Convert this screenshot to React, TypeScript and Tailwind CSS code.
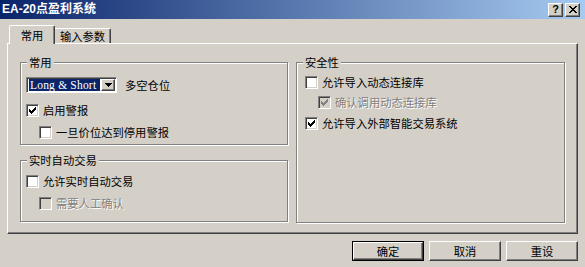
import React from "react";

const FONT = {
    fontFamily: '"Noto Sans CJK SC", "Liberation Sans", sans-serif',
};

function Check({ checked = false, disabled = false }: { checked?: boolean; disabled?: boolean }) {
    return (
        <span
            className={`relative flex h-[13px] w-[13px] shrink-0 items-center justify-center border border-t-[#808080] border-l-[#808080] border-b-white border-r-white shadow-[inset_1px_1px_0_#404040,inset_-1px_-1px_0_#d4d0c8] ${
                disabled ? "bg-[#d4d0c8]" : "bg-white"
            }`}
        >
            {checked && (
                <svg width="7" height="7" viewBox="0 0 7 7" shapeRendering="crispEdges">
                    <path
                        d="M0 2h1v1h1v1h1V3h1V2h1V1h1V0h1v3H6v1H5v1H4v1H3v1H2V6H1V5H0z"
                        fill={disabled ? "#808080" : "#000"}
                    />
                </svg>
            )}
        </span>
    );
}

function CheckRow({
    label,
    checked,
    disabled,
    indent,
}: {
    label: string;
    checked?: boolean;
    disabled?: boolean;
    indent?: boolean;
}) {
    return (
        <div className={`flex h-[14px] items-center gap-[4px] ${indent ? "ml-[13px]" : ""}`}>
            <Check checked={checked} disabled={disabled} />
            <span
                className={`leading-[14px] ${
                    disabled ? "text-[#808080] [text-shadow:1px_1px_0_#fff]" : "text-black"
                }`}
            >
                {label}
            </span>
        </div>
    );
}

function Group({
    title,
    className,
    children,
}: {
    title: string;
    className: string;
    children: React.ReactNode;
}) {
    return (
        <div
            className={`relative border border-[#808080] shadow-[1px_1px_0_#fff,inset_1px_1px_0_#fff] ${className}`}
        >
            {/* caption sits over the etched line */}
            <span className="absolute left-[6px] top-[-8px] bg-[#d4d0c8] px-[2px] leading-[14px]">
                {title}
            </span>
            {children}
        </div>
    );
}

function Raised({ className, children }: { className: string; children?: React.ReactNode }) {
    return (
        <div
            className={`flex items-center justify-center border border-t-white border-l-white border-b-[#404040] border-r-[#404040] bg-[#d4d0c8] shadow-[inset_-1px_-1px_0_#808080] ${className}`}
        >
            {children}
        </div>
    );
}

export default function App() {
    return (
        <div className="h-[267px] w-[585px] overflow-hidden bg-[#d4d0c8] text-[11.3px] text-black" style={FONT}>
            {/* Title bar */}
            <div className="flex h-[19px] items-center bg-[linear-gradient(to_right,#0a246a,#a6caf0)] pl-[2px] pr-[5px]">
                <span
                    className="text-[12px] font-bold leading-[19px] text-white"
                    style={{ fontFamily: '"Liberation Sans", "Noto Sans CJK SC", sans-serif' }}
                >
                    EA-20点盈利系统
                </span>
                <div className="ml-auto flex gap-[2px]">
                    <Raised className="h-[14px] w-[15px]">
                        <span
                            className="text-[11px] font-bold leading-[11px]"
                            style={{ fontFamily: '"Liberation Sans", sans-serif' }}
                        >
                            ?
                        </span>
                    </Raised>
                    <Raised className="h-[14px] w-[15px]">
                        <svg width="8" height="7" viewBox="0 0 8 7" shapeRendering="crispEdges">
                            <path
                                d="M0 0h2v1h1v1h2V1h1V0h2v1H7v1H6v1H5v1h1v1h1v1h1v1H6V6H5V5H3v1H2v1H0V6h1V5h1V4h1V3H2V2H1V1H0z"
                                fill="#000"
                            />
                        </svg>
                    </Raised>
                </div>
            </div>

            <div className="pl-[7px] pr-[7px]">
                {/* Tabs */}
                <div className="flex h-[24px] items-end pl-[2px]">
                    <div className="relative z-10 -mb-px flex h-[19px] w-[46px] items-start justify-center rounded-t-[2px] border-l border-t border-r border-l-white border-t-white border-r-[#404040] bg-[#d4d0c8] pt-[2px] shadow-[inset_-1px_0_0_#808080]">
                        <span className="leading-[14px]">常用</span>
                    </div>
                    <div className="flex h-[15px] w-[56px] items-start justify-center rounded-tr-[2px] border-t border-r border-t-white border-r-[#404040] shadow-[inset_-1px_0_0_#808080]">
                        <span className="leading-[14px]">输入参数</span>
                    </div>
                </div>

                {/* Tab panel */}
                <div className="flex h-[191px] gap-[8px] border border-t-white border-l-white border-b-[#404040] border-r-[#404040] px-[12px] pt-[18px] shadow-[inset_-1px_-1px_0_#808080]">
                    <div className="flex w-[268px] flex-col gap-[15px]">
                        <Group title="常用" className="h-[83px] pl-[5px] pt-[14px]">
                            <div className="flex items-center gap-[8px]">
                                <div className="flex h-[16px] w-[91px] items-center border border-t-[#808080] border-l-[#808080] border-b-white border-r-white bg-white pl-[2px] pr-[1px] shadow-[inset_1px_1px_0_#404040]">
                                    <span
                                        className="flex h-[12px] flex-1 items-center overflow-hidden whitespace-nowrap bg-[#0a246a] pl-[1px] text-[11.5px] leading-[12px] tracking-[0.2px] text-white"
                                        style={{ fontFamily: '"Liberation Serif", serif' }}
                                    >
                                        Long &amp; Short
                                    </span>
                                    <Raised className="ml-[1px] h-[12px] w-[14px] shrink-0">
                                        <svg width="7" height="4" viewBox="0 0 7 4" shapeRendering="crispEdges">
                                            <path d="M0 0h7v1H6v1H5v1H4v1H3V3H2V2H1V1H0z" fill="#000" />
                                        </svg>
                                    </Raised>
                                </div>
                                <span className="leading-[14px]">多空仓位</span>
                            </div>
                            <div className="mt-[10px] flex flex-col gap-[8px]">
                                <CheckRow label="启用警报" checked />
                                <CheckRow label="一旦价位达到停用警报" indent />
                            </div>
                        </Group>

                        <Group title="实时自动交易" className="flex h-[62px] flex-col gap-[8px] pl-[5px] pt-[13px]">
                            <CheckRow label="允许实时自动交易" />
                            <CheckRow label="需要人工确认" disabled indent />
                        </Group>
                    </div>

                    <Group title="安全性" className="flex h-[161px] w-[269px] flex-col gap-[6px] pl-[8px] pt-[12px]">
                        <CheckRow label="允许导入动态连接库" />
                        <CheckRow label="确认调用动态连接库" checked disabled indent />
                        <div className="mt-[1px]">
                            <CheckRow label="允许导入外部智能交易系统" checked />
                        </div>
                    </Group>
                </div>

                {/* Dialog buttons */}
                <div className="mt-[7px] flex justify-end gap-[5px]">
                    <div className="border border-black">
                        <Raised className="h-[18px] w-[70px]">
                            <span className="leading-[14px]">确定</span>
                        </Raised>
                    </div>
                    <Raised className="h-[20px] w-[72px]">
                        <span className="leading-[14px]">取消</span>
                    </Raised>
                    <Raised className="h-[20px] w-[72px]">
                        <span className="leading-[14px]">重设</span>
                    </Raised>
                </div>
            </div>
        </div>
    );
}
